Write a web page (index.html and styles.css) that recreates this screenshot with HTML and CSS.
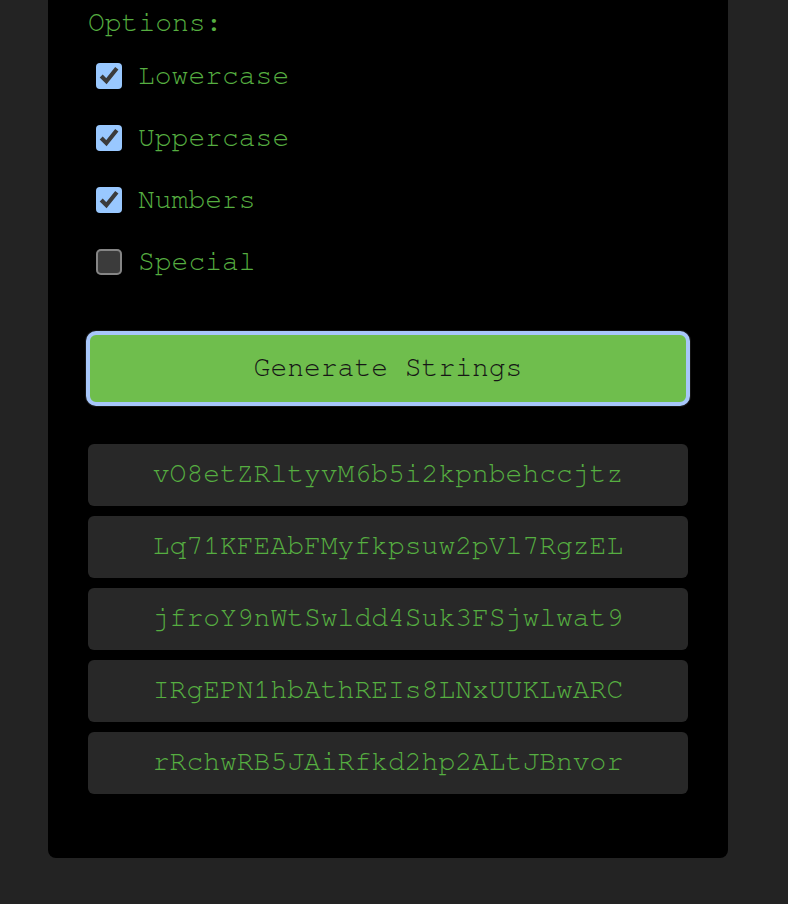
FILE: index.html
```html
<!DOCTYPE html>
<html lang="en">
<head>
<meta charset="utf-8">
<title>String Generator</title>
<link rel="stylesheet" href="styles.css">
</head>
<body>
<div class="page">
  <main class="card">
    <div class="options-label">Options:</div>
    <div class="options">
      <label class="option"><input type="checkbox" checked><span>Lowercase</span></label>
      <label class="option"><input type="checkbox" checked><span>Uppercase</span></label>
      <label class="option"><input type="checkbox" checked><span>Numbers</span></label>
      <label class="option"><input type="checkbox"><span>Special</span></label>
    </div>
    <button class="generate" type="button">Generate Strings</button>
    <div class="results">
      <div class="result">vO8etZRltyvM6b5i2kpnbehccjtz</div>
      <div class="result">Lq71KFEAbFMyfkpsuw2pVl7RgzEL</div>
      <div class="result">jfroY9nWtSwldd4Suk3FSjwlwat9</div>
      <div class="result">IRgEPN1hbAthREIs8LNxUUKLwARC</div>
      <div class="result">rRchwRB5JAiRfkd2hp2ALtJBnvor</div>
    </div>
  </main>
</div>
</body>
</html>
```

FILE: styles.css
```css
html, body {
  margin: 0;
  padding: 0;
  background: #232323;
  color-scheme: dark;
}

body {
  font-family: FreeMono, "Courier New", monospace;
  font-size: 28px;
  line-height: 32px;
  color: #56ae41;
}

.page {
  padding: 0 60px 46px 48px;
}

.card {
  background: #000;
  border-radius: 0 0 8px 8px;
  padding: 7px 40px 64px;
}

.options {
  display: flex;
  flex-direction: column;
  gap: 24px;
  margin-top: 18px;
}

.option {
  display: flex;
  align-items: center;
  height: 38px;
}

.option input {
  zoom: 2;
  margin: 3px 8px 3px 4px;
}

.generate {
  display: block;
  width: 100%;
  margin-top: 52px;
  padding: 17px 0 18px;
  font-family: inherit;
  font-size: 28px;
  line-height: 32px;
  color: #161616;
  background: #6fbe4d;
  border: 2px solid #a8c7fa;
  border-radius: 8px;
  box-shadow: 0 0 0 2px #a8c7fa, 0 0 0 3px #151515;
}

.results {
  display: flex;
  flex-direction: column;
  gap: 10px;
  margin-top: 40px;
}

.result {
  background: #282828;
  border-radius: 6px;
  padding: 14px 0 16px;
  text-align: center;
}
```
